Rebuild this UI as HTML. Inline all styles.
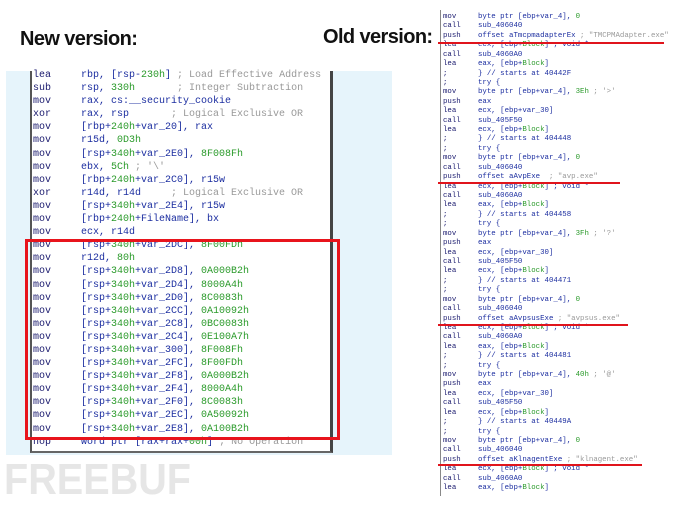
<!DOCTYPE html>
<html><head><style>
body{margin:0;width:690px;height:506px;background:#fff;position:relative;overflow:hidden;font-family:"Liberation Sans",sans-serif}
.h{position:absolute;font-weight:bold;font-size:20px;color:#111;letter-spacing:-0.6px}
#lp{position:absolute;left:6px;top:71px;width:386px;height:384px;background:#e6f4fb}
#box{position:absolute;left:30px;top:71px;width:298px;height:380px;background:#fff;border-left:2px solid #555;border-right:3px solid #444;border-bottom:2px solid #666}
.code{position:absolute;font-family:"Liberation Mono",monospace;white-space:pre;color:#1c2ea0}
#l{left:33px;top:69px;font-size:10px;line-height:13.1px}
#r{left:443px;top:13px;font-size:7.4px;line-height:9.42px}
.m{color:#1a1a6e;display:inline-block}
#l .m{width:48px}
#r .m{width:35px}
.g{color:#2a9a2a}
.c{color:#999}
.red{position:absolute;border:3px solid #e8141c}
.ul{position:absolute;height:2px;background:#e0141c;left:438px}
#vl{position:absolute;left:440px;top:10px;width:1px;height:486px;background:#888}
#fb{position:absolute;left:4px;top:455px;font-size:44px;font-weight:bold;color:#e6e6e6;transform:scaleX(0.9);transform-origin:left}
</style></head><body>
<div class="h" style="left:20px;top:28px">New version:</div>
<div class="h" style="left:323px;top:26px">Old version:</div>
<div id="lp"></div>
<div id="box"></div>
<div class="code" id="l"><span class="m">lea</span>rbp, [rsp-<span class="g">230h</span>] <span class="c">; Load Effective Address</span>
<span class="m">sub</span>rsp, <span class="g">330h</span>       <span class="c">; Integer Subtraction</span>
<span class="m">mov</span>rax, cs:__security_cookie
<span class="m">xor</span>rax, rsp       <span class="c">; Logical Exclusive OR</span>
<span class="m">mov</span>[rbp+<span class="g">240h</span>+var_20], rax
<span class="m">mov</span>r15d, <span class="g">0D3h</span>
<span class="m">mov</span>[rsp+<span class="g">340h</span>+var_2E0], <span class="g">8F008Fh</span>
<span class="m">mov</span>ebx, <span class="g">5Ch</span> <span class="c">; '\'</span>
<span class="m">mov</span>[rbp+<span class="g">240h</span>+var_2C0], r15w
<span class="m">xor</span>r14d, r14d     <span class="c">; Logical Exclusive OR</span>
<span class="m">mov</span>[rsp+<span class="g">340h</span>+var_2E4], r15w
<span class="m">mov</span>[rbp+<span class="g">240h</span>+FileName], bx
<span class="m">mov</span>ecx, r14d
<span class="m">mov</span>[rsp+<span class="g">340h</span>+var_2DC], <span class="g">8F00FDh</span>
<span class="m">mov</span>r12d, <span class="g">80h</span>
<span class="m">mov</span>[rsp+<span class="g">340h</span>+var_2D8], <span class="g">0A000B2h</span>
<span class="m">mov</span>[rsp+<span class="g">340h</span>+var_2D4], <span class="g">8000A4h</span>
<span class="m">mov</span>[rsp+<span class="g">340h</span>+var_2D0], <span class="g">8C0083h</span>
<span class="m">mov</span>[rsp+<span class="g">340h</span>+var_2CC], <span class="g">0A10092h</span>
<span class="m">mov</span>[rsp+<span class="g">340h</span>+var_2C8], <span class="g">0BC0083h</span>
<span class="m">mov</span>[rsp+<span class="g">340h</span>+var_2C4], <span class="g">0E100A7h</span>
<span class="m">mov</span>[rsp+<span class="g">340h</span>+var_300], <span class="g">8F008Fh</span>
<span class="m">mov</span>[rsp+<span class="g">340h</span>+var_2FC], <span class="g">8F00FDh</span>
<span class="m">mov</span>[rsp+<span class="g">340h</span>+var_2F8], <span class="g">0A000B2h</span>
<span class="m">mov</span>[rsp+<span class="g">340h</span>+var_2F4], <span class="g">8000A4h</span>
<span class="m">mov</span>[rsp+<span class="g">340h</span>+var_2F0], <span class="g">8C0083h</span>
<span class="m">mov</span>[rsp+<span class="g">340h</span>+var_2EC], <span class="g">0A50092h</span>
<span class="m">mov</span>[rsp+<span class="g">340h</span>+var_2E8], <span class="g">0A100B2h</span>
<span class="m">nop</span>word ptr [rax+rax+<span class="g">00h</span>] <span class="c">; No Operation</span></div>
<div class="red" style="left:25px;top:239px;width:309px;height:195px"></div>
<div id="vl"></div>
<div class="code" id="r"><span class="m">mov</span>byte ptr [ebp+var_4], <span class="g">0</span>
<span class="m">call</span>sub_406040
<span class="m">push</span>offset aTmcpmadapterEx <span class="c">; "TMCPMAdapter.exe"</span>
<span class="m">lea</span>ecx, [ebp+<span class="g">Block</span>] ; void *
<span class="m">call</span>sub_4060A0
<span class="m">lea</span>eax, [ebp+<span class="g">Block</span>]
<span class="m">;</span>} // starts at 40442F
<span class="m">;</span>try {
<span class="m">mov</span>byte ptr [ebp+var_4], <span class="g">3Eh</span> <span class="c">; '&gt;'</span>
<span class="m">push</span>eax
<span class="m">lea</span>ecx, [ebp+var_30]
<span class="m">call</span>sub_405F50
<span class="m">lea</span>ecx, [ebp+<span class="g">Block</span>]
<span class="m">;</span>} // starts at 404448
<span class="m">;</span>try {
<span class="m">mov</span>byte ptr [ebp+var_4], <span class="g">0</span>
<span class="m">call</span>sub_406040
<span class="m">push</span>offset aAvpExe  <span class="c">; "avp.exe"</span>
<span class="m">lea</span>ecx, [ebp+<span class="g">Block</span>] ; void *
<span class="m">call</span>sub_4060A0
<span class="m">lea</span>eax, [ebp+<span class="g">Block</span>]
<span class="m">;</span>} // starts at 404458
<span class="m">;</span>try {
<span class="m">mov</span>byte ptr [ebp+var_4], <span class="g">3Fh</span> <span class="c">; '?'</span>
<span class="m">push</span>eax
<span class="m">lea</span>ecx, [ebp+var_30]
<span class="m">call</span>sub_405F50
<span class="m">lea</span>ecx, [ebp+<span class="g">Block</span>]
<span class="m">;</span>} // starts at 404471
<span class="m">;</span>try {
<span class="m">mov</span>byte ptr [ebp+var_4], <span class="g">0</span>
<span class="m">call</span>sub_406040
<span class="m">push</span>offset aAvpsusExe <span class="c">; "avpsus.exe"</span>
<span class="m">lea</span>ecx, [ebp+<span class="g">Block</span>] ; void *
<span class="m">call</span>sub_4060A0
<span class="m">lea</span>eax, [ebp+<span class="g">Block</span>]
<span class="m">;</span>} // starts at 404481
<span class="m">;</span>try {
<span class="m">mov</span>byte ptr [ebp+var_4], <span class="g">40h</span> <span class="c">; '@'</span>
<span class="m">push</span>eax
<span class="m">lea</span>ecx, [ebp+var_30]
<span class="m">call</span>sub_405F50
<span class="m">lea</span>ecx, [ebp+<span class="g">Block</span>]
<span class="m">;</span>} // starts at 40449A
<span class="m">;</span>try {
<span class="m">mov</span>byte ptr [ebp+var_4], <span class="g">0</span>
<span class="m">call</span>sub_406040
<span class="m">push</span>offset aKlnagentExe <span class="c">; "klnagent.exe"</span>
<span class="m">lea</span>ecx, [ebp+<span class="g">Block</span>] ; void *
<span class="m">call</span>sub_4060A0
<span class="m">lea</span>eax, [ebp+<span class="g">Block</span>]</div>
<div class="ul" style="top:42px;width:226px"></div>
<div class="ul" style="top:182px;width:182px"></div>
<div class="ul" style="top:324px;width:190px"></div>
<div class="ul" style="top:464px;width:204px"></div>
<div id="fb">FREEBUF</div>
</body></html>
